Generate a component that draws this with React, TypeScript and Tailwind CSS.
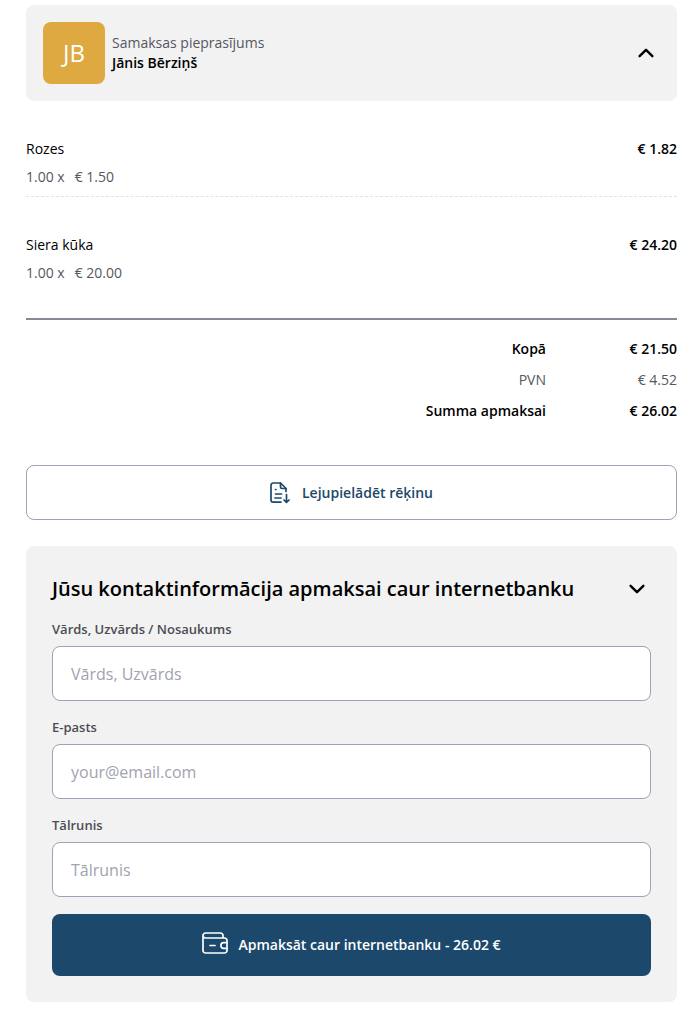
import React, { useState } from "react";

type InvoiceItem = {
  name: string;
  quantity: string;
  price: string;
  total: string;
};

const items: InvoiceItem[] = [
  { name: "Rozes", quantity: "1.00", price: "1.50", total: "1.82" },
  { name: "Siera kūka", quantity: "1.00", price: "20.00", total: "24.20" },
];

type ChevronProps = {
  up?: boolean;
};
const Chevron = ({ up }: ChevronProps) => (
  <svg width="18" height="18" viewBox="0 0 18 18" fill="none" aria-hidden="true">
    <path
      d={up ? "M2.600 12.200L9 5.800l6.400 6.400" : "M2.600 5.800L9 12.200l6.400-6.400"}
      stroke="#000"
      strokeWidth="2.400"
      strokeLinecap="round"
      strokeLinejoin="round"
    />
  </svg>
);

const InvoiceIcon = () => (
  <svg
    width="20"
    height="22"
    viewBox="0 0 20 22"
    fill="none"
    stroke="currentColor"
    strokeWidth="1.700"
    strokeLinecap="round"
    strokeLinejoin="round"
    aria-hidden="true"
  >
    <path d="M11 20.100H3.200A2.200 2.200 0 0 1 1 17.900V3.200A2.200 2.200 0 0 1 3.200 1H10.500L16 6.500V9.500" />
    <path d="M10.500 1V5a1.500 1.500 0 0 0 1.500 1.500h4" />
    <path d="M5.500 7.500h.5M5.500 12h6M5 16h6" />
    <path d="M16.500 12.500v7.800M14 18l2.500 2.500L19 18" />
  </svg>
);

const WalletIcon = () => (
  <svg
    width="26"
    height="22"
    viewBox="0 0 26 22"
    fill="none"
    stroke="currentColor"
    strokeWidth="1.700"
    strokeLinecap="round"
    strokeLinejoin="round"
    aria-hidden="true"
  >
    <path d="M21 6V3.500A2.500 2.500 0 0 0 18.500 1H3.500A2.500 2.500 0 0 0 1 3.500V18.500A2.500 2.500 0 0 0 3.500 21H22.500A2.500 2.500 0 0 0 25 18.500V8.500A2.500 2.500 0 0 0 22.500 6H3.500A2.500 2.500 0 0 1 1 3.500" />
    <path d="M25 10.700h-3.300a2.800 2.800 0 0 0 0 5.600H25" />
    <path d="M8 13.500h5" />
  </svg>
);

type FieldProps = {
  id: string;
  label: string;
  placeholder: string;
  type?: string;
};
const Field = ({ id, label, placeholder, type = "text" }: FieldProps) => (
  <div className="flex flex-col gap-1.5">
    <label htmlFor={id} className="text-[13px] leading-[21px] font-semibold text-[#4b4d55]">
      {label}
    </label>
    <input
      id={id}
      type={type}
      placeholder={placeholder}
      className="h-[55px] w-full rounded-lg border border-[#9ca3b4] bg-white px-[18px] text-base outline-none placeholder:text-[#a0a3b0]"
    />
  </div>
);

const App = () => {
  const [showItems, setShowItems] = useState(true);
  const [showForm, setShowForm] = useState(true);

  return (
    <main className="pt-[5px] pr-5 pb-[7px] pl-[26px] font-['Open_Sans','Noto_Sans',sans-serif] text-sm text-black">
      {/*Header */}
      <header className="flex items-center justify-between rounded-lg bg-[#f2f2f2] p-[17px]">
        <div className="flex items-center gap-[7px]">
          <div className="flex size-[62px] items-center justify-center rounded-lg bg-[#dea940] text-2xl text-white">
            JB
          </div>
          <div className="leading-5">
            <p className="text-[#55575f]">Samaksas pieprasījums</p>
            <p className="font-semibold">Jānis Bērziņš</p>
          </div>
        </div>
        <button
          type="button"
          aria-label="Rēķina rindas"
          aria-expanded={showItems}
          onClick={() => setShowItems(!showItems)}
          className="mr-[5px] cursor-pointer"
        >
          <Chevron up={showItems} />
        </button>
      </header>

      {/*Items */}
      {showItems && (
        <ul className="divide-y divide-dashed divide-[#e2e2e5] leading-7">
          {items.map((item) => (
            <li key={item.name} className="pt-[34px] pb-[5px]">
              <div className="flex justify-between">
                <p>{item.name}</p>
                <p className="font-semibold">€ {item.total}</p>
              </div>
              <p className="flex gap-2.5 text-[#55575f]">
                <span>{item.quantity} x</span>
                <span>€ {item.price}</span>
              </p>
            </li>
          ))}
        </ul>
      )}

      {/*Totals */}
      <dl className="mt-[26px] grid grid-cols-[1fr_131px] border-t-2 border-[#858896] pt-[13px] text-right leading-[31px] font-semibold">
        <dt>Kopā</dt>
        <dd>€ 21.50</dd>
        <dt className="font-normal text-[#55575f]">PVN</dt>
        <dd className="font-normal text-[#55575f]">€ 4.52</dd>
        <dt>Summa apmaksai</dt>
        <dd>€ 26.02</dd>
      </dl>

      <button
        type="button"
        className="mt-[39px] flex h-[55px] w-full cursor-pointer items-center justify-center gap-3 rounded-lg border border-[#9ca3b4] font-semibold text-[#1b486b]"
      >
        <InvoiceIcon />
        Lejupielādēt rēķinu
      </button>

      {/*Contact form */}
      <section className="mt-[26px] rounded-lg bg-[#f2f2f2] p-[26px]">
        <div className="flex items-center justify-between">
          <h1 className="text-xl leading-[34px] font-semibold">
            Jūsu kontaktinformācija apmaksai caur internetbanku
          </h1>
          <button
            type="button"
            aria-label="Kontaktinformācija"
            aria-expanded={showForm}
            onClick={() => setShowForm(!showForm)}
            className="mr-[5px] cursor-pointer"
          >
            <Chevron up={!showForm} />
          </button>
        </div>
        {showForm && (
          <form className="mt-[13px]" onSubmit={(e) => e.preventDefault()}>
            <div className="flex flex-col gap-4">
              <Field id="name" label="Vārds, Uzvārds / Nosaukums" placeholder="Vārds, Uzvārds" />
              <Field id="email" label="E-pasts" placeholder="your@email.com" type="email" />
              <Field id="phone" label="Tālrunis" placeholder="Tālrunis" type="tel" />
            </div>
            <button
              type="submit"
              className="mt-[17px] flex h-[62px] w-full cursor-pointer items-center justify-center gap-2.5 rounded-lg bg-[#1b486b] font-semibold text-white"
            >
              <span className="pb-1">
                <WalletIcon />
              </span>
              Apmaksāt caur internetbanku - 26.02 €
            </button>
          </form>
        )}
      </section>
    </main>
  );
};

export default App;
